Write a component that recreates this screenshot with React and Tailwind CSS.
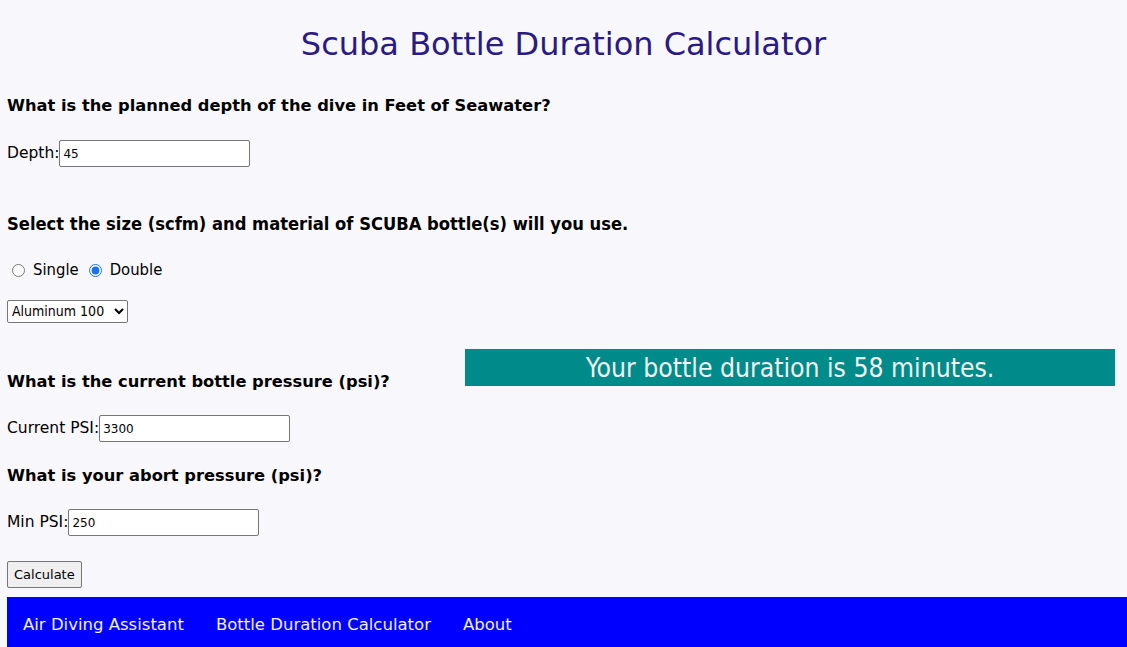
import React, { useState } from "react";

const Field = ({ label, value, width }) => (
  <div className="flex items-center text-[15.5px] text-black font-['DejaVu_Sans',sans-serif]">
    <span>{label}</span>
    <input
      type="text"
      defaultValue={value}
      className={`${width} h-[27px] border border-[#767676] rounded-[2px] bg-white px-[3px] text-[12px] text-black outline-none font-['DejaVu_Sans',sans-serif]`}
    />
  </div>
);

const App = () => {
  const [bottles, setBottles] = useState("double");

  return (
    <div className="h-[647px] overflow-hidden bg-[#f8f7fb] flex flex-col font-['DejaVu_Sans',sans-serif]">
      <h1 className="text-center text-[32px] text-[#2a1a86] pt-[24px] leading-[40px]">
        Scuba Bottle Duration Calculator
      </h1>

      <div className="px-[7px]">
        <h2 className="mt-[31px] text-[16.3px] font-bold text-black leading-[22px]">
          What is the planned depth of the dive in Feet of Seawater?
        </h2>
        <div className="mt-[23px]">
          <Field label="Depth:" value="45" width="w-[191px]" />
        </div>

        <h2 className="mt-[46px] text-[18.2px] font-bold text-black leading-[22px] font-['DejaVu_Sans_Condensed','DejaVu_Sans',sans-serif]">
          Select the size (scfm) and material of SCUBA bottle(s) will you use.
        </h2>
        <div className="mt-[23px] flex items-center text-[16.5px] font-['DejaVu_Sans_Condensed','DejaVu_Sans',sans-serif]">
          <input type="radio" name="b" className="ml-[5px] mr-[8px] w-[13px] h-[13px] accent-[#1a73e8]" checked={bottles === "single"} onChange={() => setBottles("single")} />
          <span className="mr-[10px]">Single</span>
          <input type="radio" name="b" className="mr-[8px] w-[13px] h-[13px] accent-[#1a73e8]" checked={bottles === "double"} onChange={() => setBottles("double")} />
          <span>Double</span>
        </div>
        <select className="mt-[17px] h-[23px] w-[121px] border border-[#767676] rounded-[2px] bg-white text-[14px] text-black font-['DejaVu_Sans_Condensed','DejaVu_Sans',sans-serif]" defaultValue="al100">
          <option value="al80">Aluminum 80</option>
          <option value="al100">Aluminum 100</option>
          <option value="st100">Steel 100</option>
        </select>

        <div className="flex items-start">
          <div className="w-[458px] shrink-0">
            <h2 className="mt-[48px] text-[16.3px] font-bold text-black leading-[22px]">
              What is the current bottle pressure (psi)?
            </h2>
            <div className="mt-[22px]">
              <Field label="Current PSI:" value="3300" width="w-[191px]" />
            </div>
            <h2 className="mt-[23px] text-[16.3px] font-bold text-black leading-[22px]">
              What is your abort pressure (psi)?
            </h2>
            <div className="mt-[22px]">
              <Field label="Min PSI:" value="250" width="w-[191px]" />
            </div>
            <button className="mt-[25px] h-[27px] px-[6px] border border-[#767676] rounded-[2px] bg-[#efefef] text-[13px] text-black">
              Calculate
            </button>
          </div>
          <div className="mt-[26px] w-[650px] h-[37px] bg-[#008b8b] text-[#f2f2f2] text-[26.3px] leading-none flex items-center justify-center font-['DejaVu_Sans_Condensed','DejaVu_Sans',sans-serif]">
            Your bottle duration is 58 minutes.
          </div>
        </div>
      </div>

      <nav className="mt-[9px] ml-[7px] h-[56px] shrink-0 bg-[#0000ff] flex items-center gap-[32px] px-[16px] text-[16.5px] text-[#f0f0ff]">
        <a href="#">Air Diving Assistant</a>
        <a href="#">Bottle Duration Calculator</a>
        <a href="#">About</a>
      </nav>
    </div>
  );
};

export default App;
